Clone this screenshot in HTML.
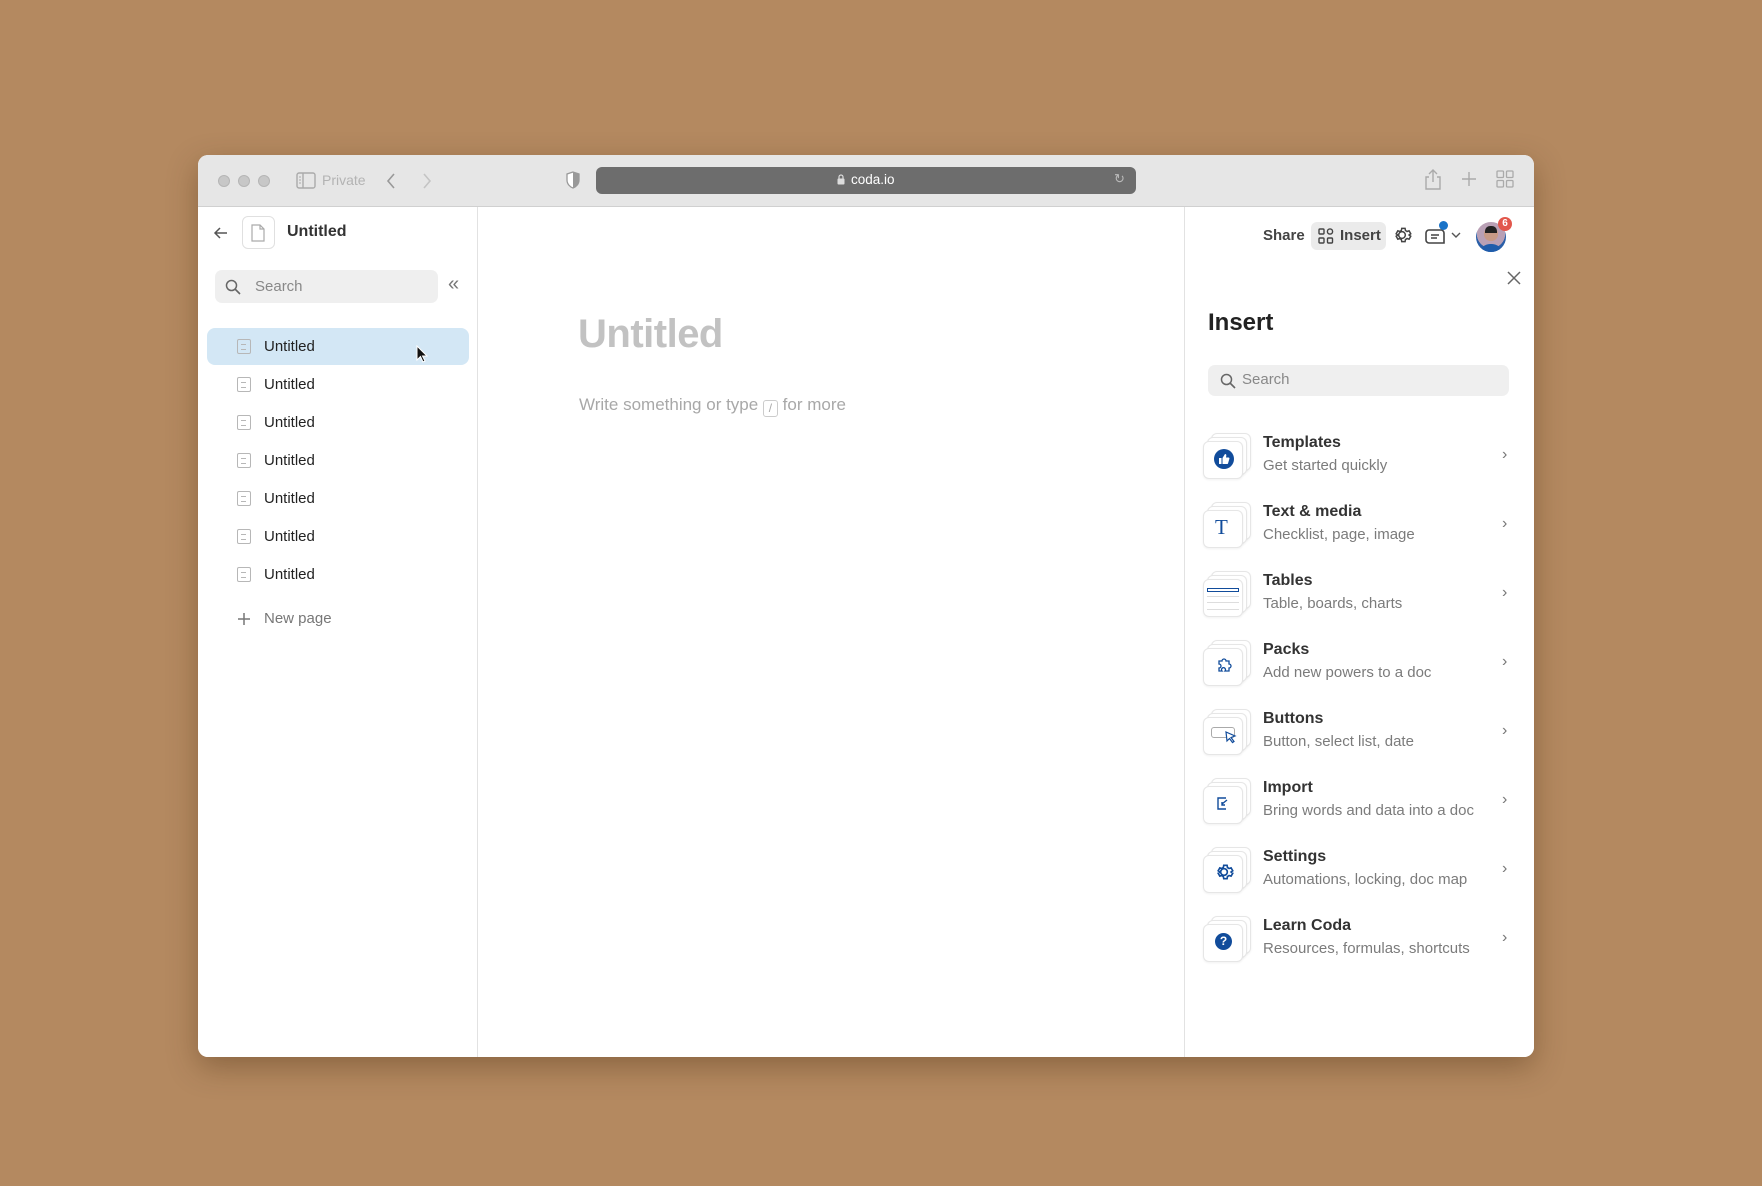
<!DOCTYPE html>
<html><head><meta charset="utf-8"><style>
*{box-sizing:border-box;margin:0;padding:0}
body{width:1762px;height:1186px;background:#b48960;font-family:"Liberation Sans",sans-serif;position:relative;overflow:hidden}
.abs{position:absolute;white-space:nowrap}
.win{left:198px;top:155px;width:1336px;height:902px;background:#fff;border-radius:10px;overflow:hidden;box-shadow:0 10px 30px rgba(60,35,10,.35)}
.tb{left:0;top:0;width:1336px;height:52px;background:#e6e6e6;border-bottom:1px solid #d0d0d0}
.dot{width:12px;height:12px;border-radius:50%;background:#c7c7c7;border:1px solid #b5b5b5;top:20px}
.side{left:0;top:52px;width:280px;height:850px;background:#fff;border-right:1px solid #e2e2e2}
.right{left:986px;top:52px;width:350px;height:850px;border-left:1px solid #e2e2e2;background:#fff}
.item{left:66px;font-size:15px;color:#222}
.pi{width:14px;height:15px;border:1.5px solid #b7b7b7;border-radius:2px}
.pi:after{content:"";position:absolute;left:3px;top:4px;width:5px;height:4px;border-top:1.5px solid #b7b7b7;border-bottom:1.5px solid #b7b7b7}
.card{width:40px;height:38px;border:1px solid #e6e6e6;border-radius:6px;background:#fff;box-shadow:0 1px 2px rgba(0,0,0,.06)}
.t{font-size:16px;font-weight:bold;color:#333}
.s{font-size:15px;color:#7b7b7b}
.chev{font-size:16px;color:#777}
</style></head><body>
<div class="abs win">
 <div class="abs tb">
  <div class="abs dot" style="left:20px"></div><div class="abs dot" style="left:40px"></div><div class="abs dot" style="left:60px"></div>
  <svg class="abs" style="left:98px;top:17px" width="20" height="17" viewBox="0 0 20 17"><rect x="1" y="1" width="18" height="15" rx="2" fill="none" stroke="#aaa" stroke-width="1.4"/><line x1="7" y1="1" x2="7" y2="16" stroke="#aaa" stroke-width="1.4"/><path d="M3 5h2M3 8h2M3 11h2" stroke="#aaa"/></svg>
  <div class="abs" style="left:124px;top:17px;font-size:14px;color:#b3b3b3">Private</div>
  <svg class="abs" style="left:187px;top:17px" width="12" height="18"><path d="M9 2L3 9l6 7" fill="none" stroke="#999" stroke-width="1.6"/></svg>
  <svg class="abs" style="left:223px;top:17px" width="12" height="18"><path d="M3 2l6 7-6 7" fill="none" stroke="#c4c4c4" stroke-width="1.6"/></svg>
  <svg class="abs" style="left:368px;top:16px" width="14" height="18"><path d="M7 1L1 3v6c0 4 3 7 6 8 3-1 6-4 6-8V3z" fill="#fff" stroke="#999" stroke-width="1.3"/><path d="M7 1v16c3-1 6-4 6-8V3z" fill="#999"/></svg>
  <div class="abs" style="left:398px;top:12px;width:540px;height:27px;background:#6d6d6d;border-radius:6px"></div>
  <svg class="abs" style="left:639px;top:19px" width="8" height="11"><rect x="0.5" y="4.5" width="7" height="6" rx="1" fill="#ddd"/><path d="M2 5V3a2 2 0 0 1 4 0v2" fill="none" stroke="#ddd" stroke-width="1.2"/></svg>
  <div class="abs" style="left:653px;top:17px;font-size:13.5px;color:#fff">coda.io</div>
  <div class="abs" style="left:916px;top:16px;font-size:13px;color:#bbb">&#x21BB;</div>
  <svg class="abs" style="left:1226px;top:13px" width="18" height="22"><path d="M5 9H2v12h14V9h-3M9 14V2M5 6l4-4 4 4" fill="none" stroke="#aaa" stroke-width="1.4"/></svg>
  <svg class="abs" style="left:1263px;top:16px" width="16" height="16"><path d="M8 1v14M1 8h14" stroke="#aaa" stroke-width="1.4"/></svg>
  <svg class="abs" style="left:1298px;top:15px" width="18" height="18"><g fill="none" stroke="#aaa" stroke-width="1.3"><rect x="1" y="1" width="6.5" height="6.5" rx="1"/><rect x="10.5" y="1" width="6.5" height="6.5" rx="1"/><rect x="1" y="10.5" width="6.5" height="6.5" rx="1"/><rect x="10.5" y="10.5" width="6.5" height="6.5" rx="1"/></g></svg>
 </div>
 <div class="abs side">
  <svg class="abs" style="left:15px;top:18px" width="16" height="16"><path d="M14 8H2M7 3L2 8l5 5" fill="none" stroke="#555" stroke-width="1.5"/></svg>
  <div class="abs" style="left:44px;top:9px;width:33px;height:33px;border:1px solid #e0e0e0;border-radius:6px"></div>
  <svg class="abs" style="left:53px;top:17px" width="15" height="18"><path d="M1 1h8l4 4v12H1z M9 1v4h4" fill="none" stroke="#aaa" stroke-width="1.2"/></svg>
  <div class="abs" style="left:89px;top:16px;font-size:16px;font-weight:bold;color:#333">Untitled</div>
  <div class="abs" style="left:17px;top:63px;width:223px;height:33px;background:#efefef;border-radius:7px"></div>
  <svg class="abs" style="left:27px;top:72px" width="16" height="16"><circle cx="6.5" cy="6.5" r="5" fill="none" stroke="#666" stroke-width="1.5"/><path d="M10 10l5 5" stroke="#666" stroke-width="1.6"/></svg>
  <div class="abs" style="left:57px;top:71px;font-size:15px;color:#888">Search</div>
  <div class="abs" style="left:250px;top:66px;font-size:20px;color:#777">&laquo;</div>
  <div class="abs" style="left:9px;top:121px;width:262px;height:37px;background:#d3e7f5;border-radius:8px"></div>
  <div class="abs pi" style="left:39px;top:132px"></div><div class="abs item" style="top:131px">Untitled</div>
  <div class="abs pi" style="left:39px;top:170px"></div><div class="abs item" style="top:169px">Untitled</div>
  <div class="abs pi" style="left:39px;top:208px"></div><div class="abs item" style="top:207px">Untitled</div>
  <div class="abs pi" style="left:39px;top:246px"></div><div class="abs item" style="top:245px">Untitled</div>
  <div class="abs pi" style="left:39px;top:284px"></div><div class="abs item" style="top:283px">Untitled</div>
  <div class="abs pi" style="left:39px;top:322px"></div><div class="abs item" style="top:321px">Untitled</div>
  <div class="abs pi" style="left:39px;top:360px"></div><div class="abs item" style="top:359px">Untitled</div>
  <svg class="abs" style="left:39px;top:405px" width="14" height="14"><path d="M7 1v12M1 7h12" stroke="#777" stroke-width="1.5"/></svg>
  <div class="abs" style="left:66px;top:403px;font-size:15px;color:#777">New page</div>
  <svg class="abs" style="left:218px;top:138px" width="12" height="18"><path d="M1 1v14l3.5-3.5 2.5 5.5 2-1-2.5-5H11z" fill="#111" stroke="#fff" stroke-width="1"/></svg>
 </div>
 <div class="abs" style="left:380px;top:157px;font-size:40px;font-weight:bold;color:#c2c2c2;letter-spacing:-0.5px">Untitled</div>
 <div class="abs" style="left:381px;top:240px;font-size:17px;color:#a8a8a8">Write something or type <span style="display:inline-block;width:15px;height:17px;border:1px solid #ccc;border-radius:3px;font-size:12px;text-align:center;line-height:15px;vertical-align:-2px">/</span> for more</div>
 <div class="abs right">
  <div class="abs" style="left:78px;top:20px;font-size:15px;font-weight:bold;color:#444">Share</div>
  <div class="abs" style="left:126px;top:15px;width:75px;height:28px;background:#ebebeb;border-radius:6px"></div>
  <svg class="abs" style="left:133px;top:21px" width="16" height="16"><g fill="none" stroke="#444" stroke-width="1.4"><rect x="1" y="1" width="5" height="5" rx="1"/><circle cx="12" cy="3.5" r="2.6"/><rect x="1" y="10" width="5" height="5" rx="1"/><rect x="9.5" y="10" width="5" height="5" rx="1"/></g></svg>
  <div class="abs" style="left:155px;top:20px;font-size:15px;font-weight:bold;color:#444">Insert</div>
  <svg class="abs" style="left:207px;top:18px" width="20" height="20" viewBox="0 0 24 24"><path d="M12 8a4 4 0 1 0 0 8 4 4 0 0 0 0-8zm8.5 4l2-1.5-2-3.5-2.4.8a7 7 0 0 0-1.9-1.1L15.7 4h-4l-.5 2.7a7 7 0 0 0-1.9 1.1L7 7 5 10.5 7 12l-2 1.5L7 17l2.3-.8a7 7 0 0 0 1.9 1.1l.5 2.7h4l.5-2.7a7 7 0 0 0 1.9-1.1l2.4.8 2-3.5z" fill="none" stroke="#444" stroke-width="1.8"/></svg>
  <svg class="abs" style="left:240px;top:18px" width="22" height="22"><path d="M4 5h12a3 3 0 0 1 3 3v10H4a3 3 0 0 1-3-3V8a3 3 0 0 1 3-3zM6 10h8M6 13h6" fill="none" stroke="#444" stroke-width="1.6"/></svg>
  <div class="abs" style="left:254px;top:14px;width:9px;height:9px;border-radius:50%;background:#1a73c8"></div>
  <svg class="abs" style="left:266px;top:25px" width="10" height="7"><path d="M1 1l4 4 4-4" fill="none" stroke="#555" stroke-width="1.4"/></svg>
  <div class="abs" style="left:291px;top:15px;width:30px;height:30px;border-radius:50%;background:radial-gradient(circle at 50% 40%,#c79a86 0 30%,#b9a0b5 31% 60%,#2a5fa8 61%);overflow:hidden"><div class="abs" style="left:9px;top:4px;width:12px;height:7px;background:#222;border-radius:5px 5px 0 0"></div><div class="abs" style="left:4px;top:22px;width:22px;height:10px;background:#1f5cab;border-radius:10px 10px 0 0"></div></div>
  <div class="abs" style="left:313px;top:10px;width:14px;height:14px;border-radius:50%;background:#e2574c;color:#fff;font-size:10px;font-weight:bold;text-align:center;line-height:14px">6</div>
  <svg class="abs" style="left:322px;top:64px" width="14" height="14"><path d="M1 1l12 12M13 1L1 13" stroke="#666" stroke-width="1.5"/></svg>
  <div class="abs" style="left:23px;top:102px;font-size:24px;font-weight:bold;color:#222">Insert</div>
  <div class="abs" style="left:23px;top:158px;width:301px;height:31px;background:#efefef;border-radius:7px"></div>
  <svg class="abs" style="left:35px;top:166px" width="16" height="16"><circle cx="6.5" cy="6.5" r="5" fill="none" stroke="#666" stroke-width="1.5"/><path d="M10 10l5 5" stroke="#666" stroke-width="1.6"/></svg>
  <div class="abs" style="left:57px;top:164px;font-size:15px;color:#888">Search</div>
 </div>
</div>
<div class="abs" style="left:0;top:0">
 <div class="abs card" style="left:1211px;top:433px"></div><div class="abs card" style="left:1207px;top:437px"></div><div class="abs card" style="left:1203px;top:441px"></div>
 <div class="abs" style="left:1214px;top:449px;width:20px;height:20px;border-radius:50%;background:#114c9b"></div>
 <svg class="abs" style="left:1218px;top:453px" width="12" height="12"><rect x="1" y="5" width="2.5" height="6" fill="#fff"/><path d="M4.5 5L7 1c1 0 1.5.7 1.3 1.8L8 4.5h2.5c.7 0 1.1.6.9 1.2L10 10.5c-.1.4-.5.5-.9.5H4.5z" fill="#fff"/></svg>
 <div class="abs t" style="left:1263px;top:434px">Templates</div><div class="abs s" style="left:1263px;top:457px">Get started quickly</div><div class="abs chev" style="left:1502px;top:446px">&#x203A;</div>
 <div class="abs card" style="left:1211px;top:502px"></div><div class="abs card" style="left:1207px;top:506px"></div><div class="abs card" style="left:1203px;top:510px"></div>
 <div class="abs" style="left:1215px;top:515px;font-family:'Liberation Serif',serif;font-size:21px;color:#114c9b">T</div>
 <div class="abs t" style="left:1263px;top:503px">Text &amp; media</div><div class="abs s" style="left:1263px;top:526px">Checklist, page, image</div><div class="abs chev" style="left:1502px;top:515px">&#x203A;</div>
 <div class="abs card" style="left:1211px;top:571px"></div><div class="abs card" style="left:1207px;top:575px"></div><div class="abs card" style="left:1203px;top:579px"></div>
 <div class="abs" style="left:1207px;top:588px;width:32px;height:4px;border:1px solid #114c9b"></div>
 <div class="abs" style="left:1207px;top:596px;width:32px;height:14px;border-top:1px solid #ddd;border-bottom:1px solid #ddd"></div><div class="abs" style="left:1207px;top:602px;width:32px;border-top:1px solid #ddd"></div>
 <div class="abs t" style="left:1263px;top:572px">Tables</div><div class="abs s" style="left:1263px;top:595px">Table, boards, charts</div><div class="abs chev" style="left:1502px;top:584px">&#x203A;</div>
 <div class="abs card" style="left:1211px;top:640px"></div><div class="abs card" style="left:1207px;top:644px"></div><div class="abs card" style="left:1203px;top:648px"></div>
 <svg class="abs" style="left:1216px;top:657px" width="16" height="16"><path d="M3 4h3a2 2 0 1 1 4 0h3v3a2 2 0 1 1 0 4v3H9a2 2 0 1 0-3 0H3v-3a2 2 0 1 0 0-4z" fill="none" stroke="#114c9b" stroke-width="1.3"/></svg>
 <div class="abs t" style="left:1263px;top:641px">Packs</div><div class="abs s" style="left:1263px;top:664px">Add new powers to a doc</div><div class="abs chev" style="left:1502px;top:653px">&#x203A;</div>
 <div class="abs card" style="left:1211px;top:709px"></div><div class="abs card" style="left:1207px;top:713px"></div><div class="abs card" style="left:1203px;top:717px"></div>
 <div class="abs" style="left:1211px;top:727px;width:24px;height:11px;border:1px solid #aaa;border-radius:3px"></div>
 <svg class="abs" style="left:1225px;top:731px" width="12" height="14"><path d="M1 1l9 4-4 1.5 3 4-1.5 1-3-4L2 10z" fill="#fff" stroke="#114c9b" stroke-width="1.2"/></svg>
 <div class="abs t" style="left:1263px;top:710px">Buttons</div><div class="abs s" style="left:1263px;top:733px">Button, select list, date</div><div class="abs chev" style="left:1502px;top:722px">&#x203A;</div>
 <div class="abs card" style="left:1211px;top:778px"></div><div class="abs card" style="left:1207px;top:782px"></div><div class="abs card" style="left:1203px;top:786px"></div>
 <svg class="abs" style="left:1217px;top:797px" width="13" height="13"><path d="M9 1H1v11h8M5 7l5-4M5 5v3h3" fill="none" stroke="#114c9b" stroke-width="1.4"/></svg>
 <div class="abs t" style="left:1263px;top:779px">Import</div><div class="abs s" style="left:1263px;top:802px">Bring words and data into a doc</div><div class="abs chev" style="left:1502px;top:791px">&#x203A;</div>
 <div class="abs card" style="left:1211px;top:847px"></div><div class="abs card" style="left:1207px;top:851px"></div><div class="abs card" style="left:1203px;top:855px"></div>
 <svg class="abs" style="left:1214px;top:862px" width="20" height="20" viewBox="0 0 24 24"><path d="M12 8a4 4 0 1 0 0 8 4 4 0 0 0 0-8zm8.5 4l2-1.5-2-3.5-2.4.8a7 7 0 0 0-1.9-1.1L15.7 4h-4l-.5 2.7a7 7 0 0 0-1.9 1.1L7 7 5 10.5 7 12l-2 1.5L7 17l2.3-.8a7 7 0 0 0 1.9 1.1l.5 2.7h4l.5-2.7a7 7 0 0 0 1.9-1.1l2.4.8 2-3.5z" fill="none" stroke="#114c9b" stroke-width="2"/></svg>
 <div class="abs t" style="left:1263px;top:848px">Settings</div><div class="abs s" style="left:1263px;top:871px">Automations, locking, doc map</div><div class="abs chev" style="left:1502px;top:860px">&#x203A;</div>
 <div class="abs card" style="left:1211px;top:916px"></div><div class="abs card" style="left:1207px;top:920px"></div><div class="abs card" style="left:1203px;top:924px"></div>
 <div class="abs" style="left:1215px;top:933px;width:17px;height:17px;border-radius:50%;background:#114c9b;color:#fff;font-size:12px;font-weight:bold;text-align:center;line-height:17px">?</div>
 <div class="abs t" style="left:1263px;top:917px">Learn Coda</div><div class="abs s" style="left:1263px;top:940px">Resources, formulas, shortcuts</div><div class="abs chev" style="left:1502px;top:929px">&#x203A;</div>
</div>
</body></html>
